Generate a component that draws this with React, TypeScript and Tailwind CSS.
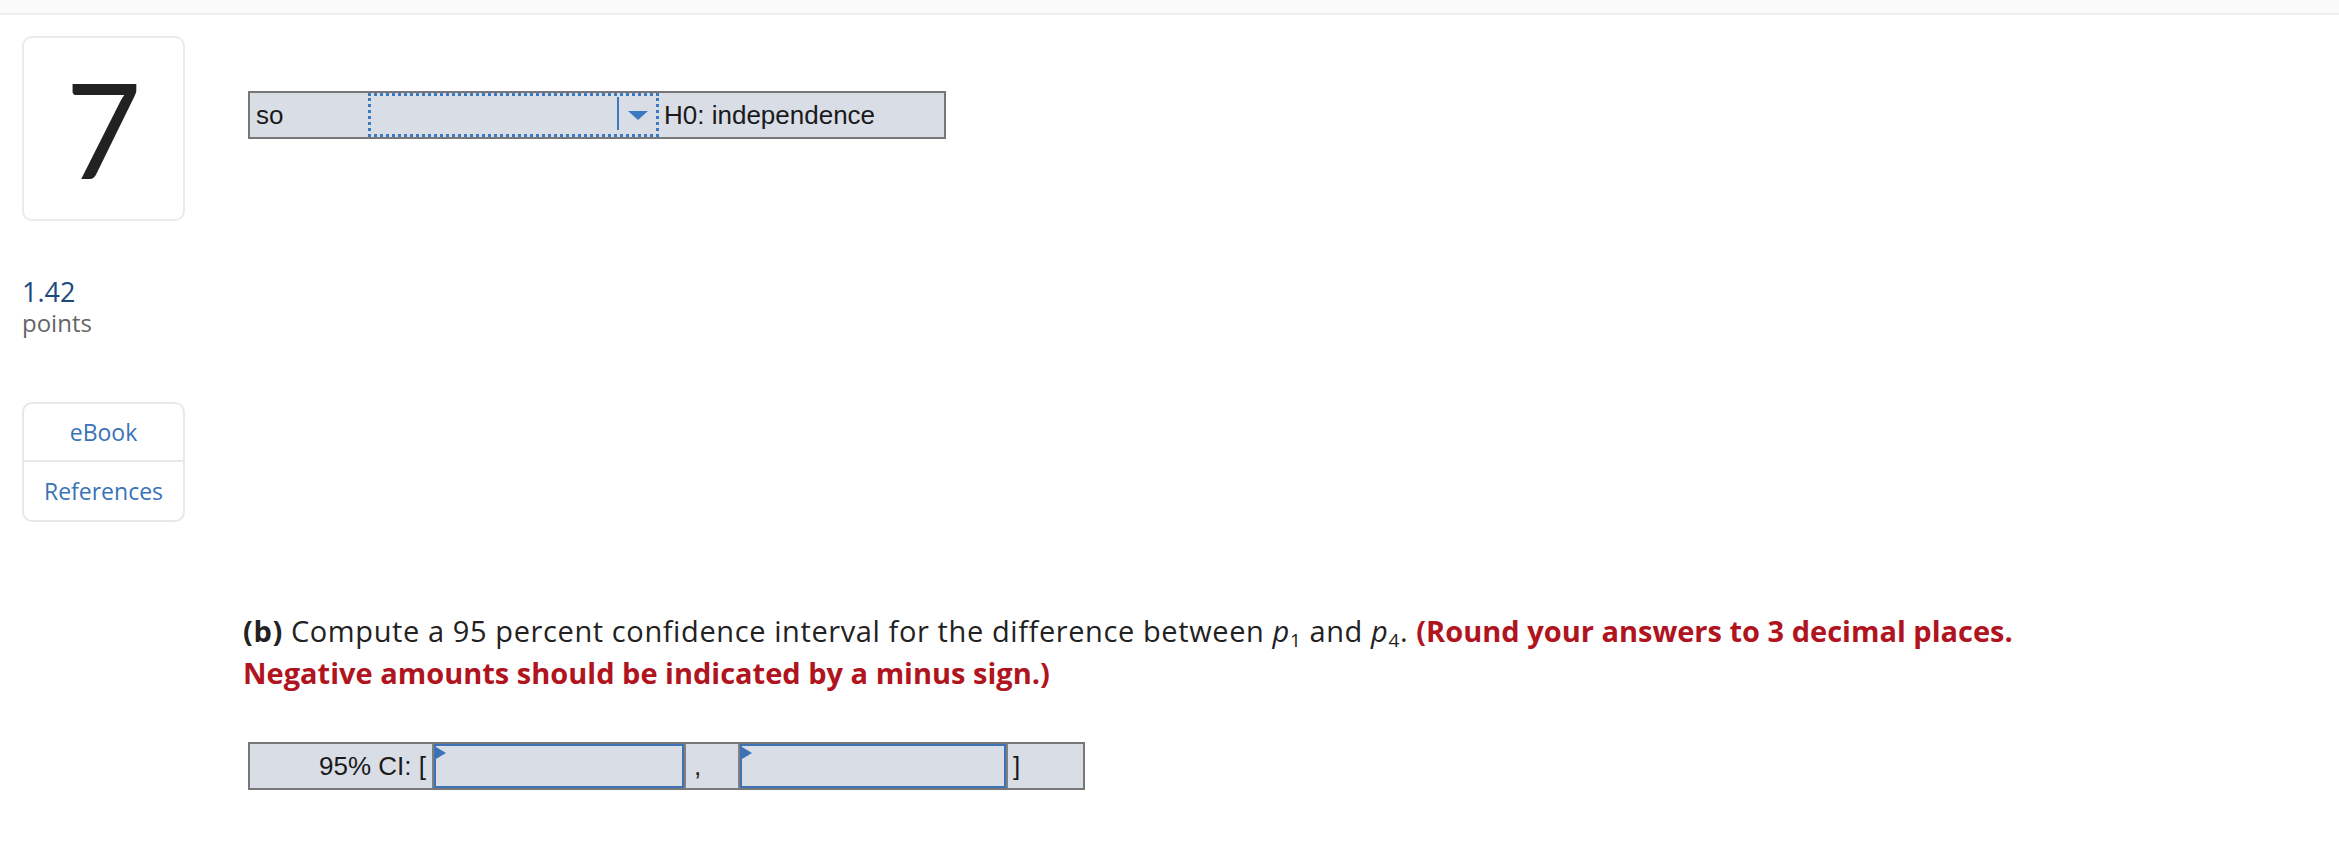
export default function App() {
  return (
    <div className="min-h-screen bg-white font-['Open_Sans',sans-serif] text-[#222]">
      {/* top strip */}
      <div className="h-[15px] bg-[#fafafa] border-b-2 border-[#eeeeee]" />

      <div className="flex pl-[22px] pt-[21px]">
        {/* sidebar */}
        <aside className="w-[163px] shrink-0">
          <div className="h-[185px] rounded-[10px] border-2 border-[#ebebeb] flex items-center justify-center">
            <span className="font-['Lato',sans-serif] text-[131px] leading-none text-[#222]">7</span>
          </div>
          <div className="mt-[53px] text-[27px] leading-[1.3] text-[#1c4a7c]">1.42</div>
          <div className="text-[24px] leading-[1.2] text-[#666]">points</div>
          <div className="mt-[64px] rounded-[10px] border-2 border-[#e8e8e8] text-[23px] text-[#3a72b8]">
            <div className="h-[58px] flex items-center justify-center border-b-2 border-[#e8e8e8]">eBook</div>
            <div className="h-[58px] flex items-center justify-center">References</div>
          </div>
        </aside>

        {/* question body */}
        <main className="ml-[58px] flex-1">
          <div className="mt-[55px] ml-[5px] w-[698px] h-[48px] flex border-2 border-[#777] bg-[#d9dde6] font-['Liberation_Sans',Arial,sans-serif] text-[26px] text-[#1a1a1a]">
            <div className="w-[118px] flex items-center pl-[6px]">so</div>
            <div className="w-[291px] flex border-[3px] border-dotted border-[#3d78c2]">
              <div className="flex-1" />
              <div className="w-[2px] mt-[1px] mb-[4px] bg-[#3d78c2]" />
              <div className="w-[37px] flex items-center justify-center">
                <div className="w-0 h-0 border-x-[10px] border-x-transparent border-t-[9px] border-t-[#3d78c2]" />
              </div>
            </div>
            <div className="flex-1 flex items-center pl-[5px]">H0: independence</div>
          </div>

          <p className="mt-[471px] max-w-[1850px] text-[29px] leading-[42px] tracking-[0.6px] text-[#222]">
            <b>(b)</b> Compute a 95 percent confidence interval for the difference between{" "}
            <i>p</i>
            <sub className="text-[19px]">1</sub> and <i>p</i>
            <sub className="text-[19px]">4</sub>.{" "}
            <b className="text-[#b0141e] tracking-normal">
              (Round your answers to 3 decimal places. Negative amounts should be indicated by a minus sign.)
            </b>
          </p>

          <div className="mt-[48px] ml-[5px] w-[837px] h-[48px] flex border-2 border-[#777] bg-[#d9dde6] font-['Liberation_Sans',Arial,sans-serif] text-[26px] text-[#1a1a1a]">
            <div className="w-[184px] flex items-center justify-end pr-[6px] border-r-2 border-[#808080]">95% CI: [</div>
            <AnswerBox width="w-[250px]" />
            <div className="w-[56px] flex items-center pl-[8px] border-x-2 border-[#808080]">,</div>
            <AnswerBox width="w-[266px]" />
            <div className="flex-1 flex items-center pl-[5px] border-l-2 border-[#808080]">]</div>
          </div>
        </main>
      </div>
    </div>
  );
}

function AnswerBox({ width }: { width: string }) {
  return (
    <div className={`${width} relative border-2 border-[#3d72b4] bg-[#d9dde6]`}>
      <div className="absolute left-0 top-[1px] w-0 h-0 border-y-[6px] border-y-transparent border-l-[10px] border-l-[#3d72b4]" />
    </div>
  );
}
